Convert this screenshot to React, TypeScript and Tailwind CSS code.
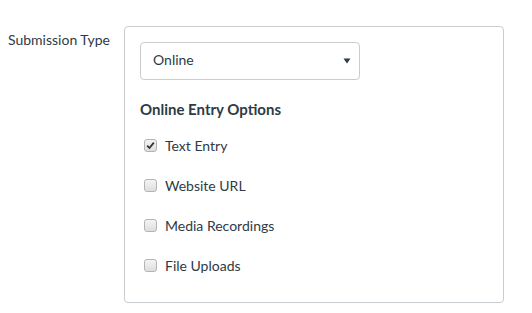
const options = [
  { label: "Text Entry", checked: true },
  { label: "Website URL", checked: false },
  { label: "Media Recordings", checked: false },
  { label: "File Uploads", checked: false },
];

const CheckRow: React.FC<{ label: string; checked: boolean }> = ({ label, checked }) => {
  return (
    <label className="flex items-center h-10">
      <span className="ml-1 w-[13px] h-[13px] rounded-[3px] border border-[#b4b4b4] bg-gradient-to-b from-[#f4f4f4] to-[#dedede] flex items-center justify-center">
        {checked && (
          <svg width="9" height="9" viewBox="0 0 9 9">
            <path d="M1.2 4.6 L3.5 7 L7.8 1.6" fill="none" stroke="#333" strokeWidth="1.8" />
          </svg>
        )}
      </span>
      <span className="ml-2 text-sm text-[#2d3b45]">{label}</span>
    </label>
  );
};

export default function App() {
  return (
    <div className="w-[532px] h-[313px] bg-white font-['Lato',sans-serif] text-[#2d3b45]">
      <div className="flex pt-[26px] pl-2">
        <div className="w-[116px] pt-[4px] text-sm">Submission Type</div>
        <div className="w-[380px] h-[277px] border border-[#c7cdd1] rounded-[4px] px-[15px] pt-[15px]">
          <div className="w-[220px] h-[38px] border border-[#c7cdd1] rounded-[4px] flex items-center justify-between pl-3 pr-2">
            <span className="text-sm -mt-[2px]">Online</span>
            <svg width="8" height="6" viewBox="0 0 8 6">
              <path d="M0.5 0.5 H7.5 L4 5.5 Z" fill="#2d3b45" />
            </svg>
          </div>
          <div className="mt-[18px] text-[15px] font-bold">Online Entry Options</div>
          <div className="mt-[5px]">
            {options.map((o) => (
              <CheckRow key={o.label} label={o.label} checked={o.checked} />
            ))}
          </div>
        </div>
      </div>
    </div>
  );
}
